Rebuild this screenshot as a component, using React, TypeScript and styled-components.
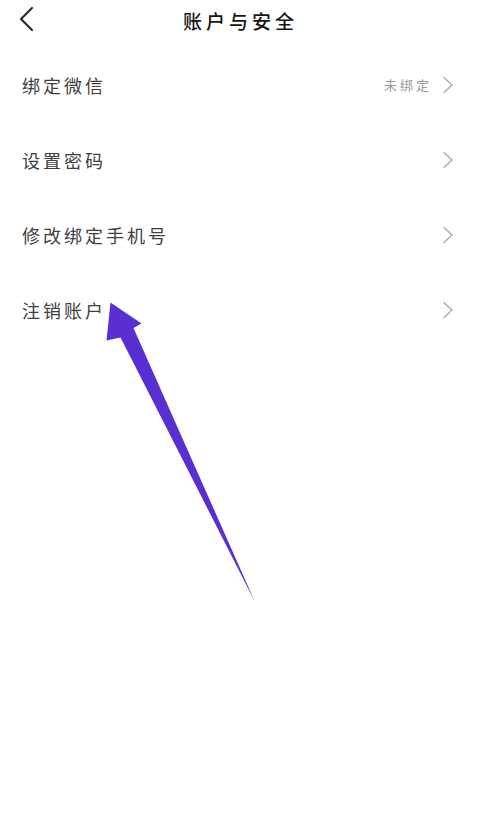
import styled, { createGlobalStyle } from "styled-components";

const GlobalStyle = createGlobalStyle`
  html, body {
    margin: 0;
    padding: 0;
    background: #ffffff;
  }
  body {
    font-family: "Noto Sans CJK SC", "Noto Sans", sans-serif;
  }
`;

interface rowProps {
  label: string;
  value?: string;
}

const rows: rowProps[] = [
  { label: "绑定微信", value: "未绑定" },
  { label: "设置密码" },
  { label: "修改绑定手机号" },
  { label: "注销账户" },
];

function Chevron({ left }: { left?: boolean }) {
  return left ? (
    <svg width="16" height="28" viewBox="0 0 16 28">
      <path
        d="M13 3 L2 14 L13 25"
        fill="none"
        stroke="#2b2b2b"
        strokeWidth="2.2"
        strokeLinecap="round"
        strokeLinejoin="round"
      />
    </svg>
  ) : (
    <svg width="12" height="18" viewBox="0 0 12 18">
      <path
        d="M2 1.5 L10 9 L2 16.5"
        fill="none"
        stroke="#a8a8a8"
        strokeWidth="1.3"
        strokeLinecap="round"
        strokeLinejoin="round"
      />
    </svg>
  );
}

function App() {
  return (
    <Page>
      <GlobalStyle />
      <Header>
        <Back>
          <Chevron left />
        </Back>
        <Title>账户与安全</Title>
      </Header>
      <List>
        {rows.map((r) => (
          <Row key={r.label}>
            <Label>{r.label}</Label>
            <Right>
              {r.value && <Value>{r.value}</Value>}
              <Chevron />
            </Right>
          </Row>
        ))}
      </List>
      {/* annotation arrow */}
      <Arrow width="477" height="816" viewBox="0 0 477 816">
        <path
          d="M110.5 302.5 L141.5 323.5 L133.5 328 L255 602 L120.5 337.5 L106.5 340.5 Z"
          fill="#5a2fd2"
        />
      </Arrow>
    </Page>
  );
}

export default App;

const Page = styled.div`
  position: relative;
  width: 477px;
  height: 816px;
  background: #ffffff;
  overflow: hidden;
`;

const Header = styled.header`
  height: 41px;
  display: flex;
  align-items: center;
  justify-content: center;
  position: relative;
`;

const Back = styled.div`
  position: absolute;
  left: 19px;
  top: 5px;
  display: flex;
`;

const Title = styled.h1`
  margin: 0;
  font-size: 19px;
  font-weight: 500;
  letter-spacing: 4px;
  padding-left: 4px;
  color: #161616;
  line-height: 1;
`;

const List = styled.div`
  padding-top: 6px;
  display: flex;
  flex-direction: column;
`;

const Row = styled.div`
  height: 75px;
  display: flex;
  align-items: center;
  justify-content: space-between;
  padding: 0 23px 0 22px;
`;

const Label = styled.span`
  font-size: 18px;
  letter-spacing: 3px;
  color: #404040;
  font-weight: 400;
`;

const Right = styled.div`
  display: flex;
  align-items: center;
  gap: 10px;
`;

const Value = styled.span`
  font-size: 13px;
  letter-spacing: 3px;
  color: #9a9a9a;
`;

const Arrow = styled.svg`
  position: absolute;
  left: 0;
  top: 0;
  pointer-events: none;
`;
